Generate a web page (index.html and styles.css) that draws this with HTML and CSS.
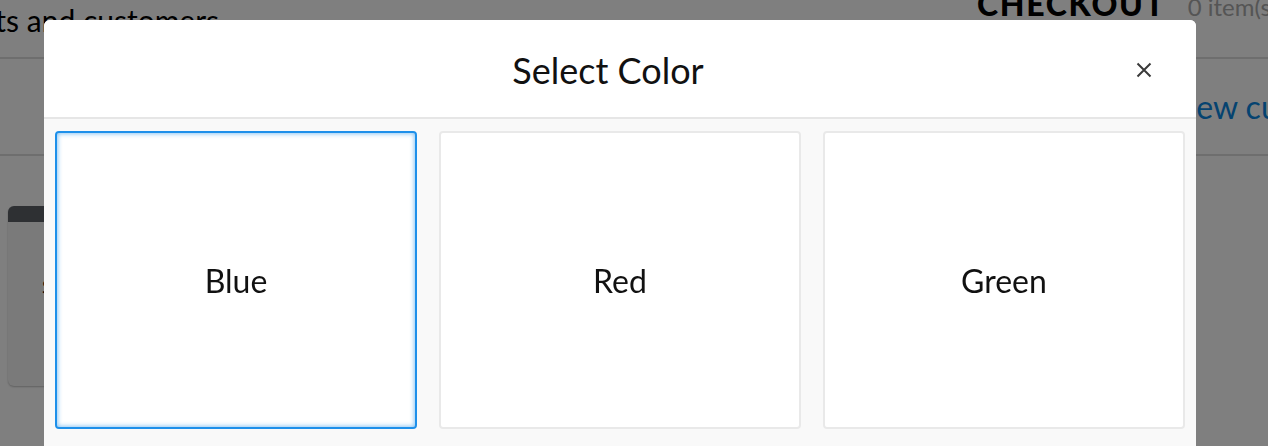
FILE: index.html
```html
<!DOCTYPE html>
<html>
<head>
<meta charset="utf-8">
<link rel="stylesheet" href="styles.css">
</head>
<body>
<div class="page">
  <header class="topbar">
    <div class="title-box">
      <h1 class="page-title">Products and customers</h1>
    </div>
    <div class="checkout">
      <span class="checkout-label">CHECKOUT</span>
      <span class="checkout-count">0 item(s)</span>
    </div>
  </header>
  <div class="toolbar">
    <a class="new-link" href="#">Add new customer</a>
  </div>
  <div class="content">
    <div class="bg-card">
      <div class="bg-card-head"></div>
      <div class="bg-card-body">Sales</div>
    </div>
  </div>
</div>
<div class="overlay"></div>
<div class="modal">
  <div class="modal-header">
    <h2 class="modal-title">Select Color</h2>
    <button class="close" aria-label="Close">
      <svg width="16" height="16" viewBox="0 0 16 16"><path d="M1.5 1.5 L14.5 14.5 M14.5 1.5 L1.5 14.5" stroke="#3a3a3a" stroke-width="2" fill="none"/></svg>
    </button>
  </div>
  <div class="modal-body">
    <div class="option selected">Blue</div>
    <div class="option">Red</div>
    <div class="option">Green</div>
  </div>
</div>
</body>
</html>
```

FILE: styles.css
```css
html, body {
  margin: 0;
  padding: 0;
  height: 100%;
  overflow: hidden;
  font-family: Lato, "Open Sans", sans-serif;
  background: #ffffff;
}

.page {
  width: 1268px;
}

.topbar {
  height: 57px;
  border-bottom: 2px solid #dcdcdc;
  display: flex;
  align-items: flex-start;
  overflow: hidden;
}

.title-box {
  width: 219px;
  flex: none;
  display: flex;
  justify-content: flex-end;
  overflow: hidden;
}

.page-title {
  margin: 0;
  font-size: 30px;
  font-weight: 400;
  line-height: 32px;
  padding-top: 4px;
  color: #000;
  white-space: nowrap;
  flex: none;
}

.checkout {
  display: flex;
  align-items: baseline;
  gap: 22px;
  margin-top: -12px;
  margin-left: 758px;
  white-space: nowrap;
  flex: none;
  line-height: 32px;
}

.checkout-label {
  font-size: 32px;
  font-weight: 900;
  letter-spacing: 1.7px;
  color: #000;
}

.checkout-count {
  font-size: 24px;
  color: #aaaaaa;
}

.toolbar {
  height: 95px;
  border-bottom: 2px solid #dcdcdc;
  display: flex;
  align-items: flex-start;
  overflow: hidden;
}

.new-link {
  font-size: 32px;
  line-height: 32px;
  color: #0a86e0;
  text-decoration: none;
  white-space: nowrap;
  margin-top: 32px;
  margin-left: 1113px;
  flex: none;
}

.content {
  padding: 50px 0 0 8px;
}

.bg-card {
  width: 300px;
  height: 180px;
  border-radius: 6px;
  overflow: hidden;
  background: #f4f4f4;
  box-shadow: 0 1px 2px rgba(0,0,0,0.25);
}

.bg-card-head {
  height: 16px;
  background: #5c6066;
}

.bg-card-body {
  padding: 52px 0 0 34px;
  font-size: 20px;
  color: #000;
}

.overlay {
  position: fixed;
  inset: 0;
  background: rgba(0, 0, 0, 0.5);
}

.modal {
  position: fixed;
  left: 44px;
  top: 20px;
  width: 1152px;
  background: #f9f9f9;
  border-radius: 6px 6px 0 0;
  overflow: hidden;
}

.modal-header {
  height: 97px;
  background: #ffffff;
  border-bottom: 2px solid #e6e6e6;
  display: flex;
  align-items: center;
  justify-content: center;
  padding-right: 24px;
  position: relative;
}

.modal-title {
  margin: 0;
  font-size: 36px;
  font-weight: 400;
  color: #111;
  padding-top: 3px;
}

.close {
  position: absolute;
  right: 44px;
  top: 42px;
  width: 16px;
  height: 16px;
  padding: 0;
  border: 0;
  background: none;
  display: flex;
}

.modal-body {
  display: grid;
  grid-template-columns: repeat(3, 1fr);
  gap: 22px;
  padding: 12px 11px 20px;
}

.option {
  height: 294px;
  background: #ffffff;
  border: 2px solid #e9e9e9;
  border-radius: 4px;
  display: flex;
  align-items: center;
  justify-content: center;
  font-size: 32px;
  color: #111;
}

.option.selected {
  border-color: #1e90ea;
  box-shadow: inset 0 0 4px 1px rgba(30, 144, 234, 0.5);
}
```
